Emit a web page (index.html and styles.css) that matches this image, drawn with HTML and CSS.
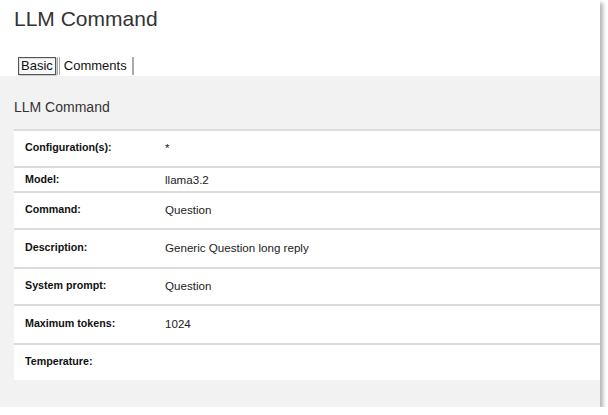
FILE: index.html
```html
<!DOCTYPE html>
<html>
<head>
<meta charset="utf-8">
<link rel="stylesheet" href="styles.css">
</head>
<body>
<div class="window">
  <div class="header">
    <h1 class="title">LLM Command</h1>
    <div class="tabs">
      <span class="tab tab-active">Basic</span>
      <span class="tab">Comments</span>
    </div>
  </div>
  <div class="panel">
    <h2 class="panel-title">LLM Command</h2>
    <div class="table">
      <div class="row"><div class="label">Configuration(s):</div><div class="value">*</div></div>
      <div class="row row-short"><div class="label">Model:</div><div class="value">llama3.2</div></div>
      <div class="row"><div class="label">Command:</div><div class="value">Question</div></div>
      <div class="row row-tall"><div class="label">Description:</div><div class="value">Generic Question long reply</div></div>
      <div class="row"><div class="label">System prompt:</div><div class="value">Question</div></div>
      <div class="row row-tall"><div class="label">Maximum tokens:</div><div class="value">1024</div></div>
      <div class="row"><div class="label">Temperature:</div><div class="value"></div></div>
    </div>
  </div>
</div>
</body>
</html>
```
FILE: styles.css
```css
html, body {
  margin: 0;
  padding: 0;
  background: #ffffff;
}
body {
  font-family: "Liberation Sans", Arial, sans-serif;
  color: #222;
}
.window {
  width: 600px;
  height: 407px;
  background: #ffffff;
  box-shadow: 3px 3px 4px rgba(0, 0, 0, 0.3);
  display: flex;
  flex-direction: column;
}
.header {
  padding: 6px 0 0 14px;
  height: 76px;
  box-sizing: border-box;
  display: flex;
  flex-direction: column;
  justify-content: space-between;
}
.title {
  margin: 0;
  font-size: 21px;
  font-weight: normal;
  color: #333;
  line-height: 26px;
}
.tabs {
  display: flex;
  padding-left: 4px;
  margin-bottom: 1px;
  align-items: flex-end;
}
.tab {
  font-size: 13px;
  line-height: 16px;
  color: #111;
  height: 18px;
  box-sizing: border-box;
  padding: 1px 5px 0 4px;
  border-left: 3px double #aaa;
  border-right: 2px solid #aaa;
  margin-left: 1px;
}
.tab-active {
  border: 1px solid #555;
  box-shadow: inset 1px 1px 0 #ddd, 1px 1px 0 #ccc;
  background: #f7f7f7;
  padding: 0 2px;
  margin-left: 0;
}
.panel {
  flex: 1;
  background: #f2f2f2;
  padding: 24px 0 0 14px;
}
.panel-title {
  margin: 0 0 15px 0;
  font-size: 14px;
  font-weight: normal;
  color: #333;
  line-height: 14px;
}
.table {
  background: #ffffff;
}
.row {
  display: flex;
  align-items: center;
  height: 37px;
  border-top: 2px solid #dcdcdc;
  box-sizing: border-box;
  padding-bottom: 3px;
}
.row-short {
  height: 25px;
  padding-bottom: 1px;
}
.row-tall {
  height: 39px;
}
.label {
  width: 140px;
  padding-left: 11px;
  font-weight: bold;
  font-size: 10.7px;
  color: #111;
}
.value {
  color: #222;
  font-size: 11.6px;
}
```
